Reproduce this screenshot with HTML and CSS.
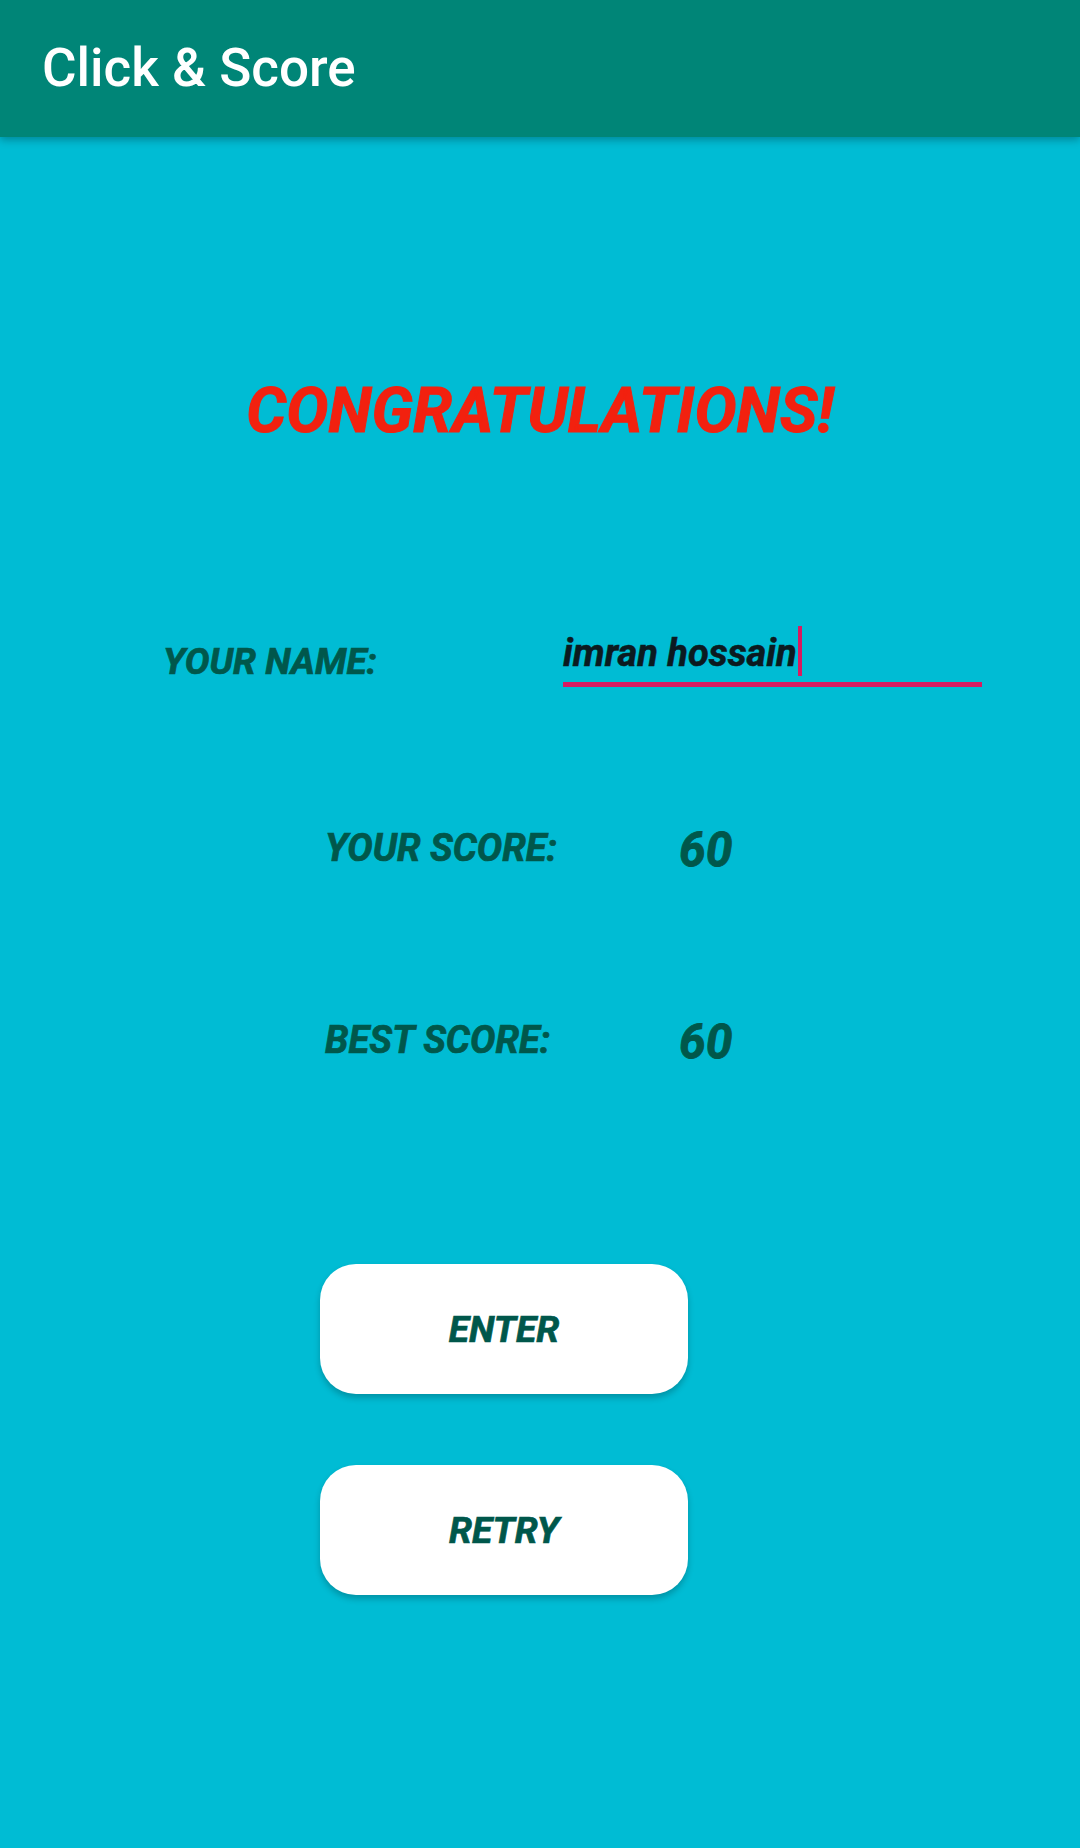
FILE: index.html
```html
<!DOCTYPE html>
<html lang="en">
<head>
<meta charset="utf-8">
<title>Click &amp; Score</title>
<link rel="stylesheet" href="styles.css">
</head>
<body>
<header class="appbar">
  <h1 class="appbar-title">Click &amp; Score</h1>
</header>
<main class="screen">
  <h2 class="congrats">CONGRATULATIONS!</h2>
  <div class="name-row">
    <span class="label name-label">YOUR NAME:</span>
    <div class="name-field">
      <span class="name-text">imran hossain</span>
      <span class="caret"></span>
    </div>
  </div>
  <div class="score-row first">
    <span class="label score-label">YOUR SCORE:</span>
    <span class="score">60</span>
  </div>
  <div class="score-row second">
    <span class="label score-label">BEST SCORE:</span>
    <span class="score">60</span>
  </div>
  <div class="actions">
    <button class="btn">ENTER</button>
    <button class="btn">RETRY</button>
  </div>
</main>
</body>
</html>
```
FILE: styles.css
```css
html, body {
  margin: 0;
  padding: 0;
}
body {
  width: 1080px;
  height: 1848px;
  overflow: hidden;
  background: #00BCD4;
  font-family: Roboto, "Noto Sans", sans-serif;
}
.appbar {
  position: relative;
  z-index: 1;
  height: 137px;
  box-sizing: border-box;
  padding-left: 42px;
  background: #008577;
  box-shadow: 0 3px 8px rgba(0, 0, 0, 0.28);
}
.appbar-title {
  margin: 0;
  padding-top: 37px;
  font-weight: 500;
  font-size: 53px;
  line-height: normal;
  color: #ffffff;
}
.screen {
  display: flex;
  flex-direction: column;
}
.congrats {
  margin: 237px 0 0;
  text-align: center;
  font-style: italic;
  font-weight: 700;
  font-size: 63px;
  line-height: normal;
  color: #F2210F;
  -webkit-text-stroke: 1px #F2210F;
}
.label {
  font-style: italic;
  font-weight: 700;
  line-height: normal;
  color: #00574B;
  -webkit-text-stroke: 0.7px #00574B;
}
.name-row {
  margin-top: 178px;
  display: grid;
  grid-template-columns: 400px 419px;
  padding-left: 163px;
}
.name-label {
  margin-top: 15px;
  font-size: 37px;
}
.name-field {
  display: flex;
  align-items: flex-start;
  padding-bottom: 6px;
  border-bottom: 5px solid #D81B60;
}
.name-text {
  margin-top: 6px;
  font-style: italic;
  font-weight: 700;
  font-size: 38px;
  line-height: normal;
  color: #0b1a20;
  -webkit-text-stroke: 0.5px #0b1a20;
}
.caret {
  margin-top: 1px;
  margin-left: 1px;
  width: 4px;
  height: 50px;
  background: #D81B60;
}
.score-row {
  display: grid;
  grid-template-columns: 354px auto;
  padding-left: 325px;
}
.score-row.first {
  margin-top: 134px;
}
.score-row.second {
  margin-top: 135px;
}
.score-label {
  margin-top: 5px;
  font-size: 38px;
}
.score {
  font-style: italic;
  font-weight: 700;
  font-size: 48px;
  line-height: normal;
  color: #00574B;
  -webkit-text-stroke: 0.8px #00574B;
}
.actions {
  margin-top: 194px;
  padding-left: 320px;
  display: flex;
  flex-direction: column;
  gap: 71px;
}
.btn {
  width: 368px;
  height: 130px;
  border: none;
  border-radius: 36px;
  background: #ffffff;
  box-shadow: 0 4px 6px rgba(0, 0, 0, 0.22);
  font-family: Roboto, "Noto Sans", sans-serif;
  font-style: italic;
  font-weight: 700;
  font-size: 37px;
  color: #00574B;
  -webkit-text-stroke: 0.7px #00574B;
  padding: 0;
}
```
